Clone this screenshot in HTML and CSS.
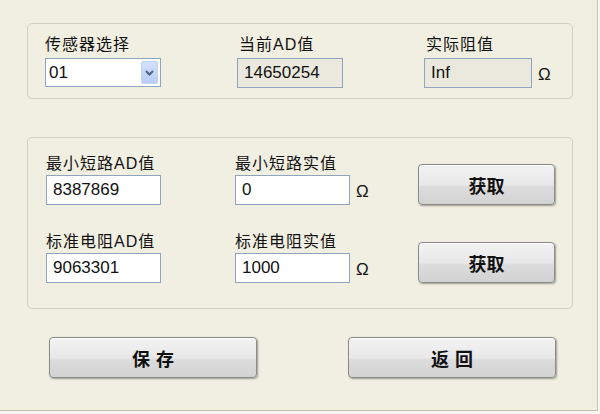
FILE: index.html
```html
<!DOCTYPE html>
<html lang="zh-CN">
<head>
  <meta charset="UTF-8" />
  <title>传感器标定</title>
  <link rel="stylesheet" href="styles.css">
</head>
<body>
  <div class="window">

    <section class="group group-live">
      <div class="field">
        <label class="cap">传感器选择</label>
        <div class="select">
          <span class="select-val">01</span>
          <span class="drop">
            <svg width="9" height="6" viewBox="0 0 9 6">
              <path d="M1 1 L4.5 4.5 L8 1" fill="none" stroke="#4d6185" stroke-width="2"/>
            </svg>
          </span>
        </div>
      </div>
      <div class="field">
        <label class="cap shift">当前AD值</label>
        <div class="box readonly w-ad">14650254</div>
      </div>
      <div class="field">
        <label class="cap shift">实际阻值</label>
        <div class="unit-row">
          <div class="box readonly w-res">Inf</div>
          <span class="unit">Ω</span>
        </div>
      </div>
    </section>

    <section class="group group-cal">
      <div class="cal-row">
        <div class="field">
          <label class="cap">最小短路AD值</label>
          <div class="box">8387869</div>
        </div>
        <div class="field">
          <label class="cap">最小短路实值</label>
          <div class="unit-row">
            <div class="box">0</div>
            <span class="unit">Ω</span>
          </div>
        </div>
        <button class="btn btn-get">获取</button>
      </div>
      <div class="cal-row row-2">
        <div class="field">
          <label class="cap">标准电阻AD值</label>
          <div class="box">9063301</div>
        </div>
        <div class="field">
          <label class="cap">标准电阻实值</label>
          <div class="unit-row">
            <div class="box">1000</div>
            <span class="unit">Ω</span>
          </div>
        </div>
        <button class="btn btn-get">获取</button>
      </div>
    </section>

    <div class="actions">
      <button class="btn btn-wide">保存</button>
      <button class="btn btn-wide">返回</button>
    </div>

  </div>
</body>
</html>
```

FILE: styles.css
```css
:root {
  --face: #f1efe2;
  --frame: #d3d0c1;
  --field-line: #8fa5bd;
  --readonly: #ebe9de;
  --ink: #111;
}

* {
  margin: 0;
  padding: 0;
  box-sizing: border-box;
}

body {
  background: #f7f6f0;
  font-family: "Liberation Sans", "Noto Sans CJK SC", sans-serif;
  color: var(--ink);
}

.window {
  width: 598px;
  height: 411px;
  background: var(--face);
  border-right: 1px solid #c9c7bc;
  border-bottom: 1px solid #c2c0b5;
  padding: 23px 0 0 27px;
}

/* group boxes */
.group {
  width: 546px;
  border: 1px solid var(--frame);
  border-radius: 5px;
}

.group-live {
  display: grid;
  grid-template-columns: 192px 187px auto;
  padding: 11px 0 10px 17px;
}

.group-cal {
  margin-top: 38px;
  padding: 16px 0 25px 18px;
}

.cal-row {
  display: grid;
  grid-template-columns: 189px 183px 137px;
  align-items: end;
}

.row-2 {
  margin-top: 27px;
}

.cap {
  display: block;
  font-size: 16px;
  letter-spacing: 1px;
  line-height: 20px;
  height: 20px;
  margin-bottom: 1px;
}

.group-live .cap {
  margin-bottom: 3px;
}

.cap.shift {
  padding-left: 2px;
}

/* text boxes */
.box {
  width: 115px;
  height: 30px;
  line-height: 28px;
  border: 1px solid var(--field-line);
  background: #fff;
  font-size: 17px;
  padding-left: 6px;
  white-space: nowrap;
}

.readonly {
  background: var(--readonly);
}

.w-ad {
  width: 106px;
}

.w-res {
  width: 108px;
}

.unit-row {
  display: flex;
  align-items: center;
}

.unit {
  font-size: 17px;
  margin: 4px 0 0 6px;
}

/* combo box */
.select {
  width: 116px;
  height: 29px;
  border: 1px solid var(--field-line);
  background: #fff;
  display: flex;
  align-items: center;
  justify-content: space-between;
  padding: 0 2px 0 3px;
  font-size: 17px;
}

.drop {
  width: 17px;
  height: 23px;
  border: 1px solid #c3d3f3;
  border-radius: 2px;
  background: linear-gradient(#d4e0fb, #b9cdf6);
  display: flex;
  align-items: center;
  justify-content: center;
}

/* push buttons */
.btn {
  height: 41px;
  border: 1px solid #8a8a86;
  border-radius: 4px;
  background: linear-gradient(#f3f3f3 0%, #e8e8e8 50%, #dcdcdc 56%, #d3d3d3 100%);
  box-shadow: inset 0 1px 0 #fff, 1px 1px 2px rgba(0, 0, 0, 0.35);
  font-family: "Noto Sans CJK SC", sans-serif;
  font-weight: 700;
  font-size: 18px;
  color: #111;
}

.btn-get {
  width: 137px;
}

.actions {
  display: flex;
  gap: 91px;
  margin: 28px 0 0 22px;
}

.btn-wide {
  width: 208px;
  letter-spacing: 6px;
  text-indent: 6px;
}
```
